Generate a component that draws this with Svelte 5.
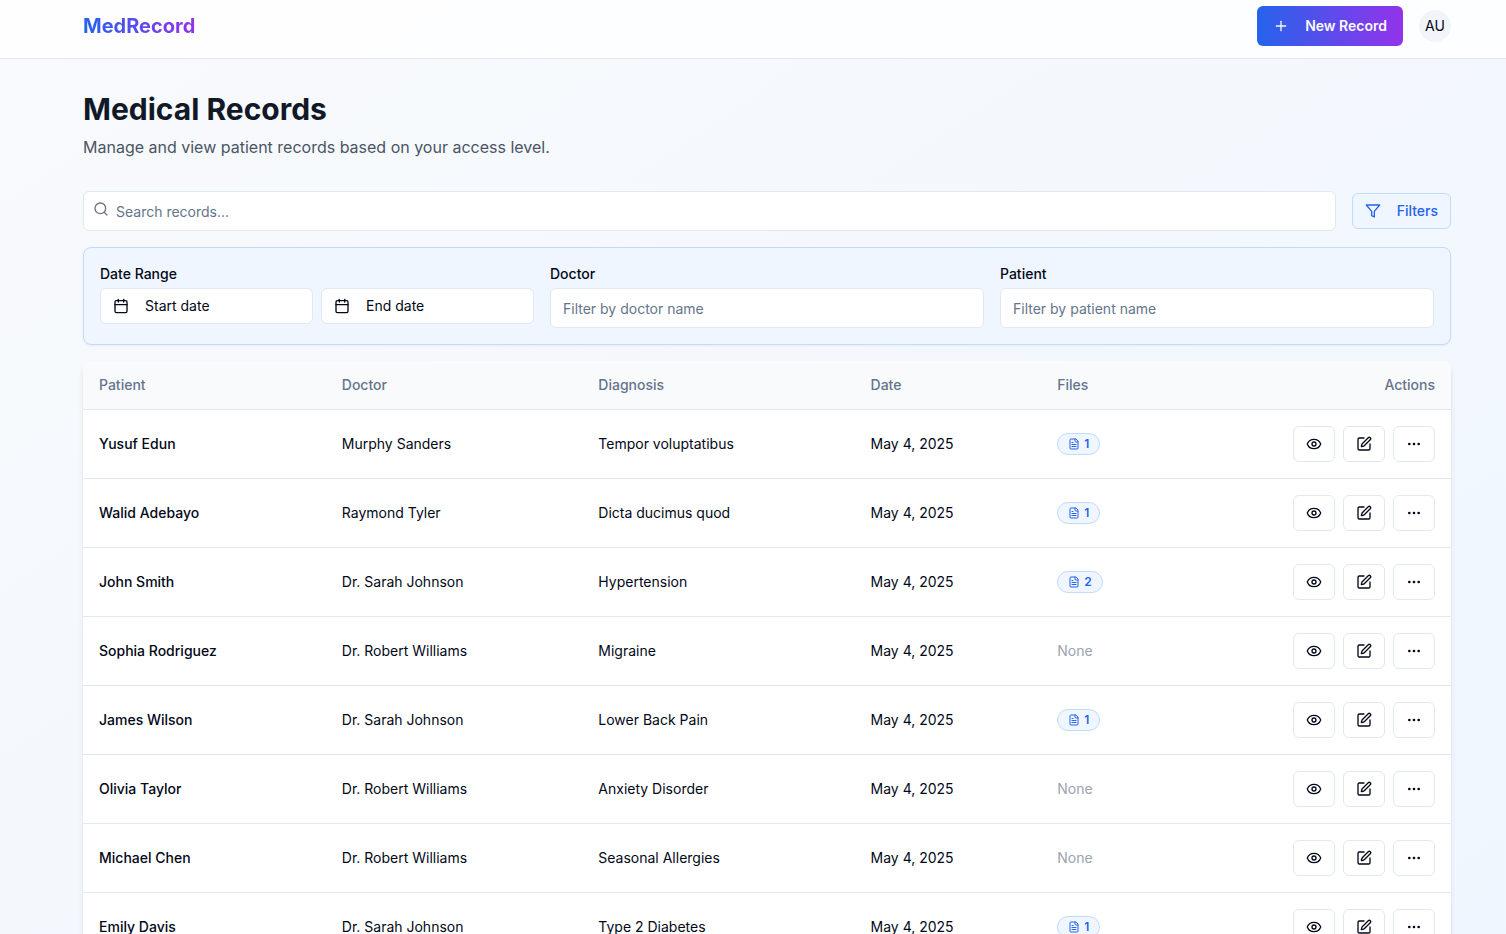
<script>
  let search = $state("");
  let doctor = $state("");
  let patient = $state("");
  let showFilters = $state(true);

  const records = [
    { patient: "Yusuf Edun", doctor: "Murphy Sanders", diagnosis: "Tempor voluptatibus", date: "May 4, 2025", files: 1 },
    { patient: "Walid Adebayo", doctor: "Raymond Tyler", diagnosis: "Dicta ducimus quod", date: "May 4, 2025", files: 1 },
    { patient: "John Smith", doctor: "Dr. Sarah Johnson", diagnosis: "Hypertension", date: "May 4, 2025", files: 2 },
    { patient: "Sophia Rodriguez", doctor: "Dr. Robert Williams", diagnosis: "Migraine", date: "May 4, 2025", files: 0 },
    { patient: "James Wilson", doctor: "Dr. Sarah Johnson", diagnosis: "Lower Back Pain", date: "May 4, 2025", files: 1 },
    { patient: "Olivia Taylor", doctor: "Dr. Robert Williams", diagnosis: "Anxiety Disorder", date: "May 4, 2025", files: 0 },
    { patient: "Michael Chen", doctor: "Dr. Robert Williams", diagnosis: "Seasonal Allergies", date: "May 4, 2025", files: 0 },
    { patient: "Emily Davis", doctor: "Dr. Sarah Johnson", diagnosis: "Type 2 Diabetes", date: "May 4, 2025", files: 1 },
  ];

  const has = (text, query) => text.toLowerCase().includes(query.toLowerCase());

  let filtered = $derived(
    records.filter(
      (r) =>
        has(`${r.patient} ${r.doctor} ${r.diagnosis}`, search) &&
        has(r.doctor, doctor) &&
        has(r.patient, patient)
    )
  );
</script>

{#snippet calendar()}
  <svg class="icon" viewBox="0 0 24 24" aria-hidden="true">
    <path d="M8 2v4" />
    <path d="M16 2v4" />
    <rect width="18" height="18" x="3" y="4" rx="2" />
    <path d="M3 10h18" />
  </svg>
{/snippet}

<div class="page">
  <header>
    <a class="logo" href="/">MedRecord</a>
    <div class="user">
      <button class="new">
        <svg class="icon" viewBox="0 0 24 24" aria-hidden="true">
          <path d="M5 12h14" />
          <path d="M12 5v14" />
        </svg>
        New Record
      </button>
      <button class="avatar" aria-label="Account AU">AU</button>
    </div>
  </header>

  <main>
    <h1>Medical Records</h1>
    <p class="intro">Manage and view patient records based on your access level.</p>

    <div class="toolbar">
      <div class="search">
        <svg class="icon" viewBox="0 0 24 24" aria-hidden="true">
          <circle cx="11" cy="11" r="8" />
          <path d="m21 21-4.3-4.3" />
        </svg>
        <input type="search" placeholder="Search records..." aria-label="Search records" bind:value={search} />
      </div>
      <button class="toggle" aria-expanded={showFilters} onclick={() => (showFilters = !showFilters)}>
        <svg class="icon" viewBox="0 0 24 24" aria-hidden="true">
          <polygon points="22 3 2 3 10 12.46 10 19 14 21 14 12.46 22 3" />
        </svg>
        Filters
      </button>
    </div>

    {#if showFilters}
      <div class="filters">
        <div class="field" role="group" aria-labelledby="range">
          <span class="label" id="range">Date Range</span>
          <div class="dates">
            <button class="date">{@render calendar()} Start date</button>
            <button class="date">{@render calendar()} End date</button>
          </div>
        </div>
        <div class="field">
          <label class="label" for="doctor">Doctor</label>
          <input id="doctor" placeholder="Filter by doctor name" bind:value={doctor} />
        </div>
        <div class="field">
          <label class="label" for="patient">Patient</label>
          <input id="patient" placeholder="Filter by patient name" bind:value={patient} />
        </div>
      </div>
    {/if}

    <div class="card">
      <table>
        <colgroup>
          <col class="c-patient" />
          <col class="c-doctor" />
          <col class="c-diagnosis" />
          <col class="c-date" />
          <col class="c-files" />
          <col />
        </colgroup>
        <thead>
          <tr>
            <th>Patient</th>
            <th>Doctor</th>
            <th>Diagnosis</th>
            <th>Date</th>
            <th>Files</th>
            <th class="right">Actions</th>
          </tr>
        </thead>
        <tbody>
          {#each filtered as record}
            <tr>
              <td class="name">{record.patient}</td>
              <td>{record.doctor}</td>
              <td>{record.diagnosis}</td>
              <td>{record.date}</td>
              <td>
                {#if record.files}
                  <span class="badge">
                    <svg class="icon" viewBox="0 0 24 24" aria-hidden="true">
                      <path d="M15 2H6a2 2 0 0 0-2 2v16a2 2 0 0 0 2 2h12a2 2 0 0 0 2-2V7Z" />
                      <path d="M14 2v4a2 2 0 0 0 2 2h4" />
                      <path d="M10 9H8" />
                      <path d="M16 13H8" />
                      <path d="M16 17H8" />
                    </svg>
                    {record.files}
                  </span>
                {:else}
                  <span class="none">None</span>
                {/if}
              </td>
              <td>
                <div class="actions">
                  <button aria-label="View record">
                    <svg class="icon" viewBox="0 0 24 24" aria-hidden="true">
                      <path d="M2.062 12.348a1 1 0 0 1 0-.696 10.75 10.75 0 0 1 19.876 0 1 1 0 0 1 0 .696 10.75 10.75 0 0 1-19.876 0" />
                      <circle cx="12" cy="12" r="3" />
                    </svg>
                  </button>
                  <button aria-label="Edit record">
                    <svg class="icon" viewBox="0 0 24 24" aria-hidden="true">
                      <path d="M12 3H5a2 2 0 0 0-2 2v14a2 2 0 0 0 2 2h14a2 2 0 0 0 2-2v-7" />
                      <path d="M18.375 2.625a1 1 0 0 1 3 3l-9.013 9.014a2 2 0 0 1-.853.505l-2.873.84a.5.5 0 0 1-.62-.62l.84-2.873a2 2 0 0 1 .506-.852z" />
                    </svg>
                  </button>
                  <button aria-label="More actions">
                    <svg class="icon" viewBox="0 0 24 24" aria-hidden="true">
                      <circle cx="12" cy="12" r="1" />
                      <circle cx="19" cy="12" r="1" />
                      <circle cx="5" cy="12" r="1" />
                    </svg>
                  </button>
                </div>
              </td>
            </tr>
          {/each}
        </tbody>
      </table>
    </div>
  </main>
</div>

<style>
  :global(body) {
    font-family: Inter, "Liberation Sans", sans-serif;
    font-size: 14px;
    line-height: 20px;
    color: #020817;
  }
  .page {
    min-height: 100vh;
    background: linear-gradient(to bottom right, #f8fafc, #eff6ff);
  }
  button,
  input {
    box-sizing: border-box;
    font: inherit;
    color: inherit;
    border: 1px solid #e2e8f0;
    border-radius: 6px;
    background: white;
  }
  button {
    display: flex;
    align-items: center;
    gap: 16px;
    height: 36px;
    padding: 0 12px;
    cursor: pointer;
  }
  input {
    width: 100%;
    height: 40px;
    padding: 0 12px;
  }
  input::placeholder {
    color: #64748b;
    opacity: 1;
  }
  .icon {
    width: 16px;
    height: 16px;
    flex-shrink: 0;
    fill: none;
    stroke: currentColor;
    stroke-width: 2;
    stroke-linecap: round;
    stroke-linejoin: round;
  }
  header {
    display: flex;
    align-items: center;
    justify-content: space-between;
    padding: 6px 55px 12px 83px;
    border-bottom: 1px solid #e2e8f0;
    background: rgba(255, 255, 255, 0.8);
  }
  .logo {
    font-size: 20px;
    line-height: 28px;
    font-weight: 700;
    text-decoration: none;
    color: transparent;
    background: linear-gradient(to right, #2563eb, #9333ea);
    background-clip: text;
  }
  .user {
    display: flex;
    align-items: center;
    gap: 16px;
  }
  .new {
    height: 40px;
    padding: 0 16px;
    border: none;
    font-weight: 600;
    color: #f8fafc;
    background: linear-gradient(to right, #2563eb, #9333ea);
  }
  .avatar {
    justify-content: center;
    width: 32px;
    height: 32px;
    padding: 0;
    border: none;
    border-radius: 50%;
    background: #f1f5f9;
  }
  main {
    padding: 32px 55px 32px 83px;
  }
  h1 {
    margin: 0 0 8px;
    font-size: 30px;
    line-height: 36px;
    font-weight: 700;
    color: #111827;
  }
  .intro {
    margin: 0 0 32px;
    font-size: 16px;
    line-height: 24px;
    color: #4b5563;
  }
  .toolbar {
    display: flex;
    align-items: center;
    gap: 16px;
    margin-bottom: 16px;
  }
  .search {
    position: relative;
    flex: 1;
  }
  .search .icon {
    position: absolute;
    left: 10px;
    top: 10px;
    color: #6b7280;
  }
  .search input {
    display: block;
    padding-left: 32px;
  }
  .toggle {
    color: #2563eb;
    font-weight: 500;
    border-color: #bfdbfe;
    background: #eff6ff;
  }
  .filters {
    display: grid;
    grid-template-columns: repeat(3, 1fr);
    gap: 16px;
    margin-bottom: 16px;
    padding: 16px;
    border: 1px solid #bfdbfe;
    border-radius: 8px;
    background: #eff6ff;
    box-shadow: 0 1px 2px rgba(0, 0, 0, 0.05);
  }
  .field {
    display: flex;
    flex-direction: column;
    gap: 4px;
  }
  .label {
    font-weight: 500;
  }
  .dates {
    display: grid;
    grid-template-columns: 1fr 1fr;
    gap: 8px;
  }
  .card {
    overflow: hidden;
    border-radius: 8px;
    background: white;
    box-shadow: 0 4px 6px -1px rgba(0, 0, 0, 0.1), 0 2px 4px -2px rgba(0, 0, 0, 0.1);
  }
  table {
    width: 100%;
    table-layout: fixed;
    border-collapse: separate;
    border-spacing: 0;
  }
  .c-patient {
    width: 17.75%;
  }
  .c-doctor {
    width: 18.75%;
  }
  .c-diagnosis {
    width: 19.9%;
  }
  .c-date {
    width: 13.65%;
  }
  .c-files {
    width: 10%;
  }
  th {
    height: 48px;
    padding: 0 16px;
    text-align: left;
    font-weight: 500;
    color: #64748b;
    background: #f9fafb;
    border-bottom: 1px solid #e2e8f0;
  }
  td {
    padding: 16px;
    border-bottom: 1px solid #e2e8f0;
  }
  .right {
    text-align: right;
  }
  .name {
    font-weight: 500;
  }
  .badge {
    display: inline-flex;
    align-items: center;
    gap: 4px;
    padding: 2px 10px;
    border: 1px solid #bfdbfe;
    border-radius: 11px;
    font-size: 12px;
    line-height: 16px;
    font-weight: 600;
    color: #2563eb;
    background: #eff6ff;
    vertical-align: middle;
  }
  .badge .icon {
    width: 12px;
    height: 12px;
  }
  .none {
    color: #9ca3af;
  }
  .actions {
    display: flex;
    justify-content: flex-end;
    gap: 8px;
  }
</style>
